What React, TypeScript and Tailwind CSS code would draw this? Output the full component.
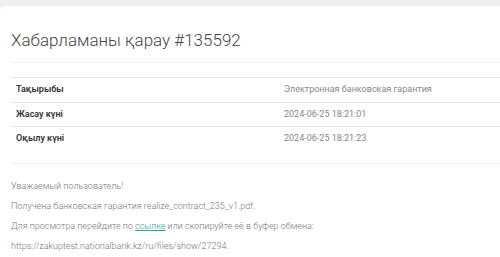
import React from "react";

type Row = {
  label: string;
  value: string;
};

const rows: Row[] = [
  { label: "Тақырыбы", value: "Электронная банковская гарантия" },
  { label: "Жасау күні", value: "2024-06-25 18:21:01" },
  { label: "Оқылу күні", value: "2024-06-25 18:21:23" },
];

const App: React.FC = () => {
  return (
    <div
      className="h-[257px] w-[500px] overflow-hidden bg-[#eef0f0] pt-[6px]"
      style={{ fontFamily: "Roboto, 'Noto Sans', sans-serif" }}
    >
      <div className="h-full rounded-tl-[5px] bg-white pl-[11px]">
        <h1 className="pt-[22px] pb-[10px] text-[17px] leading-[24px] font-light text-[#444] border-b border-[#efefef]">
          Хабарламаны қарау #135592
        </h1>

        <div className="mt-[14px] border-t border-[#e6e6e6]">
          {rows.map((row, index) => (
            <div
              key={index}
              className={`flex h-[24px] items-center text-[9px] ${
                index > 0 ? "border-t border-[#e8e8e8]" : ""
              }`}
            >
              <div className="w-[273px] pl-[5px] font-semibold text-[#333]">{row.label}</div>
              <div className="text-[#888]">{row.value}</div>
            </div>
          ))}
        </div>

        <div className="mt-[13px] border-t border-[#f2f2f2] pt-[12px] text-[9px] leading-[20px] font-light text-[#777]">
          <p>Уважаемый пользователь!</p>
          <p>Получена банковская гарантия realize_contract_235_v1.pdf.</p>
          <p>
            Для просмотра перейдите по{" "}
            <a href="#" className="text-[#26a69a] underline">
              ссылке
            </a>{" "}
            или скопируйте её в буфер обмена:
          </p>
          <p>https://zakuptest.nationalbank.kz/ru/files/show/27294.</p>
        </div>
      </div>
    </div>
  );
};

export default App;
